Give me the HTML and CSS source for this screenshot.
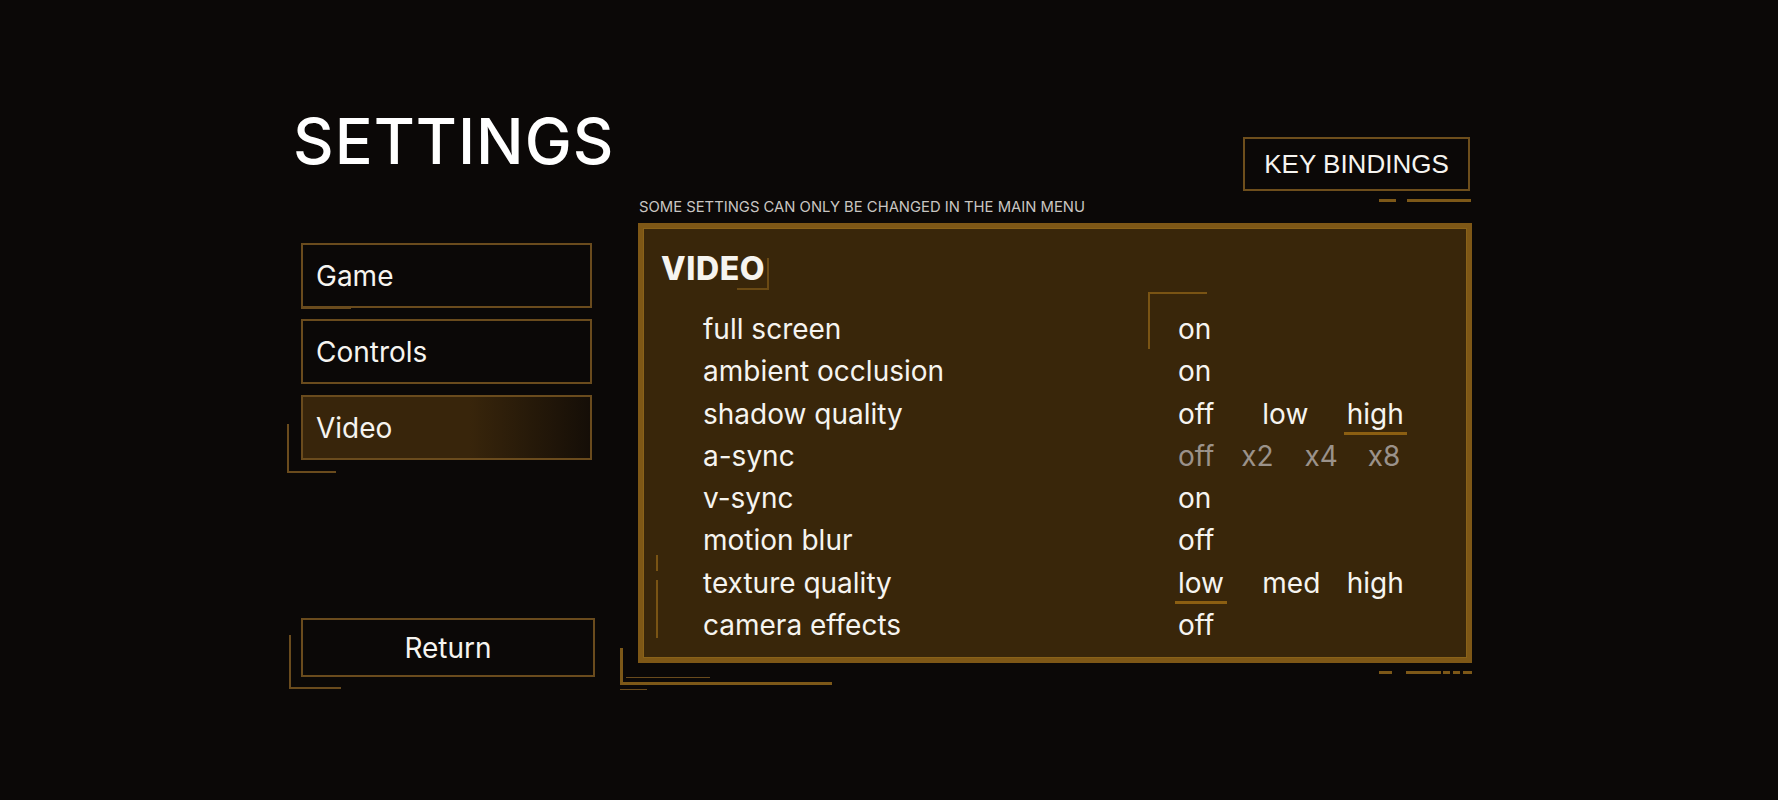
FILE: index.html
```html
<!DOCTYPE html>
<html lang="en">
<head>
<meta charset="utf-8">
<title>Settings</title>
<link rel="stylesheet" href="styles.css">
</head>
<body>
<div class="page">
  <div class="left-col">
    <h1 class="title">SETTINGS</h1>
    <nav class="nav">
      <div class="nav-btn nav-game">Game</div>
      <div class="nav-btn">Controls</div>
      <div class="nav-btn nav-active">Video</div>
    </nav>
    <div class="return-btn">Return</div>
  </div>
  <div class="right-col">
    <div class="kb-btn">KEY BINDINGS</div>
    <div class="sub-row">
      <div class="subtitle">SOME SETTINGS CAN ONLY BE CHANGED IN THE MAIN MENU</div>
      <div class="dashes dashes-top"><span class="d1"></span><span class="d2"></span></div>
    </div>
    <section class="panel">
      <h2 class="panel-title">VIDEO</h2>
      <div class="rows">
        <div class="row"><div class="label">full screen</div><div class="opts"><span class="opt"><span>on</span></span></div></div>
        <div class="row"><div class="label">ambient occlusion</div><div class="opts"><span class="opt"><span>on</span></span></div></div>
        <div class="row"><div class="label">shadow quality</div><div class="opts"><span class="opt"><span>off</span></span><span class="opt"><span>low</span></span><span class="opt"><span class="sel">high</span></span></div></div>
        <div class="row row-dim"><div class="label">a-sync</div><div class="opts"><span class="opt"><span>off</span></span><span class="opt"><span>x2</span></span><span class="opt"><span>x4</span></span><span class="opt"><span>x8</span></span></div></div>
        <div class="row"><div class="label">v-sync</div><div class="opts"><span class="opt"><span>on</span></span></div></div>
        <div class="row"><div class="label">motion blur</div><div class="opts"><span class="opt"><span>off</span></span></div></div>
        <div class="row"><div class="label">texture quality</div><div class="opts"><span class="opt"><span class="sel">low</span></span><span class="opt"><span>med</span></span><span class="opt"><span>high</span></span></div></div>
        <div class="row"><div class="label">camera effects</div><div class="opts"><span class="opt"><span>off</span></span></div></div>
      </div>
      <span class="deco deco-title"></span>
      <span class="deco deco-value"></span>
      <span class="deco deco-side1"></span>
      <span class="deco deco-side2"></span>
      <span class="deco deco-bl-v"></span>
      <span class="deco deco-bl-h"></span>
      <span class="deco deco-bl-thin"></span>
      <span class="deco deco-bl-small"></span>
    </section>
    <div class="dashes dashes-bottom"><span class="b1"></span><span class="b2"></span><span class="b3"></span><span class="b4"></span><span class="b5"></span></div>
  </div>
</div>
</body>
</html>
```
FILE: styles.css
```css
html, body {
  margin: 0;
  padding: 0;
  background: #0b0807;
}
body {
  font-family: Inter, "Noto Sans", sans-serif;
  color: #f6f4f0;
  height: 800px;
  overflow: hidden;
}
.page {
  display: flex;
  padding-left: 287px;
}
.left-col {
  width: 351px;
  display: flex;
  flex-direction: column;
  padding-top: 109px;
}
.title {
  margin: 0 0 0 6px;
  font-size: 63px;
  line-height: 64px;
  font-weight: 500;
  letter-spacing: 1px;
  color: #ffffff;
}
.nav {
  margin-top: 70px;
  margin-left: 14px;
  display: flex;
  flex-direction: column;
  gap: 11px;
}
.nav-btn {
  position: relative;
  width: 291px;
  height: 65px;
  box-sizing: border-box;
  border: 2px solid #6a4b1d;
  display: flex;
  align-items: center;
  padding-left: 13px;
  font-size: 28px;
}
.nav-game::after {
  content: "";
  position: absolute;
  left: -2px;
  bottom: -3px;
  width: 50px;
  height: 1px;
  background: #6a4b1d;
}
.nav-active {
  background: linear-gradient(to right, #38250b 0%, #38250b 58%, #150e07 100%);
}
.nav-active::before {
  content: "";
  position: absolute;
  left: -16px;
  top: 27px;
  width: 47px;
  height: 47px;
  border-left: 2px solid #6a4b1d;
  border-bottom: 2px solid #6a4b1d;
}
.return-btn {
  position: relative;
  margin-top: 158px;
  margin-left: 14px;
  width: 294px;
  height: 59px;
  box-sizing: border-box;
  border: 2px solid #6a4b1d;
  display: flex;
  align-items: center;
  justify-content: center;
  font-size: 28px;
}
.return-btn::before {
  content: "";
  position: absolute;
  left: -14px;
  top: 15px;
  width: 50px;
  height: 52px;
  border-left: 2px solid #6a4b1d;
  border-bottom: 2px solid #6a4b1d;
}
.right-col {
  width: 834px;
  display: flex;
  flex-direction: column;
  padding-top: 137px;
}
.kb-btn {
  align-self: flex-end;
  margin-right: 2px;
  width: 227px;
  height: 54px;
  box-sizing: border-box;
  border: 2px solid #6e4e1c;
  display: flex;
  align-items: center;
  justify-content: center;
  font-family: "Liberation Sans", Arial, sans-serif;
  font-size: 26px;
  color: #f6f4f0;
}
.sub-row {
  display: flex;
  justify-content: space-between;
  align-items: flex-start;
  margin-top: 6px;
  height: 20px;
}
.subtitle {
  margin-left: 1px;
  font-size: 14.8px;
  line-height: 20px;
  color: #c9c6c2;
}
.dashes {
  display: flex;
  align-items: flex-start;
}
.dashes span {
  display: block;
  height: 3px;
  background: #7d5818;
}
.dashes-top {
  margin-top: 2px;
  margin-right: 1px;
}
.dashes-top .d1 { width: 17px; margin-right: 11px; }
.dashes-top .d2 { width: 64px; }
.panel {
  position: relative;
  margin-top: 6px;
  height: 440px;
  box-sizing: border-box;
  border: 5px solid #7e5716;
  box-shadow: inset 0 0 0 1px #8a6219;
  background: #39260a;
  padding: 25px 0 0 18px;
}
.panel-title {
  margin: 0;
  font-size: 32px;
  line-height: 32px;
  font-weight: 800;
  letter-spacing: 0.6px;
}
.rows {
  margin-top: 23px;
  padding-left: 42px;
}
.row {
  display: flex;
  font-size: 28px;
  line-height: 42.3px;
  height: 42.3px;
}
.label {
  width: 472px;
}
.opts {
  display: flex;
  width: 253px;
}
.opt {
  flex: 1;
}
.opt > span {
  padding: 0 3px;
}
.opt > span.sel {
  border-bottom: 3px solid #8c5f12;
  padding-bottom: 1px;
}
.row-dim .opts {
  color: #9b928a;
}
.deco {
  position: absolute;
  display: block;
  box-sizing: border-box;
}
.deco-title {
  left: 94px;
  top: 30px;
  width: 32px;
  height: 32px;
  border-right: 2px solid #6b4a14;
  border-bottom: 2px solid #6b4a14;
}
.deco-value {
  left: 505px;
  top: 64px;
  width: 59px;
  height: 57px;
  border-left: 2px solid #7a5414;
  border-top: 2px solid #7a5414;
}
.deco-side1 {
  left: 13px;
  top: 327px;
  width: 2px;
  height: 16px;
  background: #7a5414;
}
.deco-side2 {
  left: 13px;
  top: 352px;
  width: 2px;
  height: 58px;
  background: #7a5414;
}
.deco-bl-v {
  left: -23px;
  top: 420px;
  width: 3px;
  height: 37px;
  background: #7d5818;
}
.deco-bl-h {
  left: -23px;
  top: 454px;
  width: 212px;
  height: 3px;
  background: #7d5818;
}
.deco-bl-thin {
  left: -17px;
  top: 449px;
  width: 84px;
  height: 1px;
  background: #6a4b1d;
}
.deco-bl-small {
  left: -23px;
  top: 461px;
  width: 27px;
  height: 1px;
  background: #6a4b1d;
}
.dashes-bottom {
  align-self: flex-end;
  margin-top: 8px;
}
.dashes-bottom .b1 { width: 13px; margin-right: 14px; }
.dashes-bottom .b2 { width: 35px; margin-right: 2px; }
.dashes-bottom .b3 { width: 7px; margin-right: 3px; }
.dashes-bottom .b4 { width: 7px; margin-right: 3px; }
.dashes-bottom .b5 { width: 9px; }
```
